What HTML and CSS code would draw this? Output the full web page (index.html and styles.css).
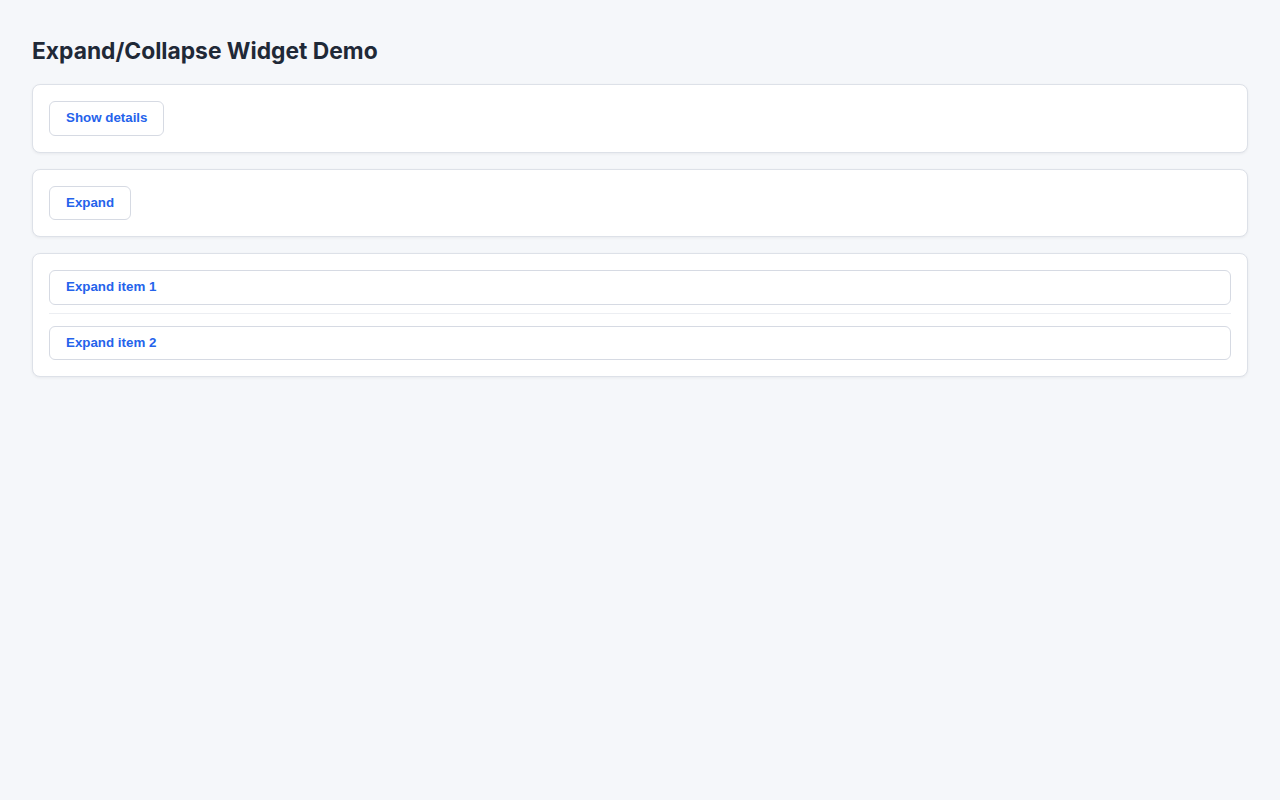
FILE: index.html
```html
<!DOCTYPE html>
<html>
<head>
    <title>Expand/Collapse Widget Demo</title>
<link rel="stylesheet" href="styles.css">
</head>
<body>
    <h1 class="title">Expand/Collapse Widget Demo</h1>

    <div class="card">
        <button class="toggle">Show details</button>
    </div>

    <div class="card">
        <button class="toggle">Expand</button>
    </div>

    <div class="card">
        <div class="item">
            <button class="toggle wide">Expand item 1</button>
        </div>
        <div class="item">
            <button class="toggle wide">Expand item 2</button>
        </div>
    </div>
</body>
</html>
```

FILE: styles.css
```css
body {
	margin: 0;
	padding: 32px;
	background-color: #f5f7fa;
	font-family: Inter, "Liberation Sans", sans-serif;
	color: #1f2937;
}

.title {
	margin: 0 0 16px;
	padding-top: 2px;
	font-size: 22.8px;
	line-height: 34px;
	font-weight: 700;
	color: #1f2937;
}

.card {
	background-color: #ffffff;
	border: 1px solid #dde1e8;
	border-radius: 8px;
	box-shadow: 0 1px 3px rgba(16, 24, 40, 0.06);
	padding: 16px;
	margin-bottom: 16px;
}

.toggle {
	display: block;
	background-color: #ffffff;
	border: 1px solid #d6dae3;
	border-radius: 6px;
	padding: 8px 16px;
	font-family: "Liberation Sans", Arial, sans-serif;
	font-size: 13.333px;
	line-height: 16.5px;
	font-weight: 700;
	color: #2563eb;
	text-align: left;
	cursor: pointer;
}

.wide {
	width: 100%;
}

.item {
	padding-bottom: 8px;
	border-bottom: 1px solid #eceef2;
}

.item + .item {
	padding-top: 12px;
	padding-bottom: 0;
	border-bottom: none;
}
```
